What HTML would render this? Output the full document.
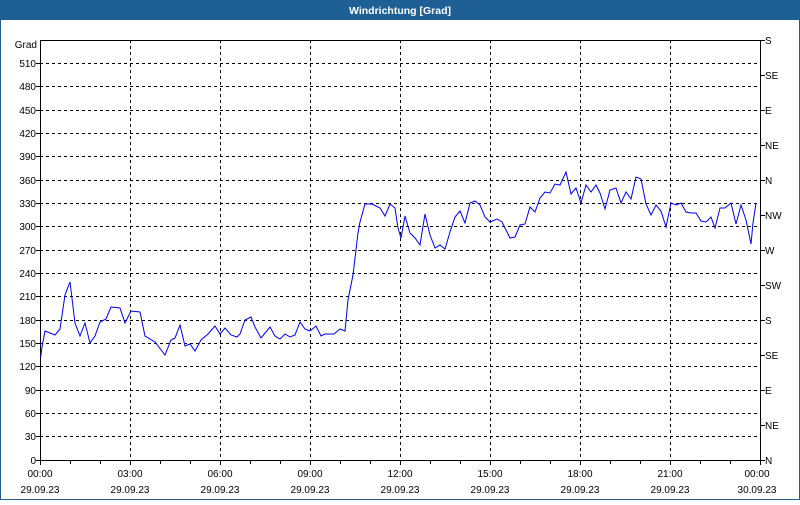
<!DOCTYPE html>
<html><head><meta charset="utf-8"><style>
body{margin:0;width:800px;height:500px;overflow:hidden;background:#fff;font-family:"Liberation Sans",sans-serif}
</style></head><body>
<svg width="800" height="500" xmlns="http://www.w3.org/2000/svg" font-family="Liberation Sans, sans-serif" font-size="10">
<rect x="0" y="0" width="800" height="500" fill="#fff"/>
<rect x="0" y="0" width="800" height="20" fill="#1e5f96"/>
<rect x="0.5" y="0.5" width="799" height="499" fill="none" stroke="#1e5f96"/>
<text x="400" y="14" text-anchor="middle" fill="#fff" font-weight="bold" font-size="10.5">Windrichtung [Grad]</text>
<g stroke="#000" stroke-dasharray="3,3" stroke-width="1">
<path d="M40 63.5H760M40 86.5H760M40 110.5H760M40 133.5H760M40 156.5H760M40 180.5H760M40 203.5H760M40 226.5H760M40 250.5H760M40 273.5H760M40 296.5H760M40 320.5H760M40 343.5H760M40 366.5H760M40 390.5H760M40 413.5H760M40 436.5H760"/>
<path d="M130.5 40V460M220.5 40V460M310.5 40V460M400.5 40V460M490.5 40V460M580.5 40V460M670.5 40V460"/>
</g>
<rect x="40.5" y="40.5" width="720" height="420" fill="none" stroke="#000"/>
<g stroke="#000">
<path d="M36 63.5H40M36 86.5H40M36 110.5H40M36 133.5H40M36 156.5H40M36 180.5H40M36 203.5H40M36 226.5H40M36 250.5H40M36 273.5H40M36 296.5H40M36 320.5H40M36 343.5H40M36 366.5H40M36 390.5H40M36 413.5H40M36 436.5H40M36 460.5H40"/>
<path d="M760 40.5H765M760 75.5H765M760 110.5H765M760 145.5H765M760 180.5H765M760 215.5H765M760 250.5H765M760 285.5H765M760 320.5H765M760 355.5H765M760 390.5H765M760 425.5H765M760 460.5H765"/>
<path d="M40.5 460V465M70.5 460V464M100.5 460V464M130.5 460V465M160.5 460V464M190.5 460V464M220.5 460V465M250.5 460V464M280.5 460V464M310.5 460V465M340.5 460V464M370.5 460V464M400.5 460V465M430.5 460V464M460.5 460V464M490.5 460V465M520.5 460V464M550.5 460V464M580.5 460V465M610.5 460V464M640.5 460V464M670.5 460V465M700.5 460V464M730.5 460V464M760.5 460V465"/>
</g>
<g text-anchor="end" fill="#000">
<text x="37" y="48">Grad</text>
<text x="36" y="67">510</text><text x="36" y="90">480</text><text x="36" y="114">450</text><text x="36" y="137">420</text><text x="36" y="160">390</text><text x="36" y="184">360</text><text x="36" y="207">330</text><text x="36" y="230">300</text><text x="36" y="254">270</text><text x="36" y="277">240</text><text x="36" y="300">210</text><text x="36" y="324">180</text><text x="36" y="347">150</text><text x="36" y="370">120</text><text x="36" y="394">90</text><text x="36" y="417">60</text><text x="36" y="440">30</text><text x="36" y="464">0</text>
</g>
<g fill="#000">
<text x="765" y="44">S</text><text x="765" y="79">SE</text><text x="765" y="114">E</text><text x="765" y="149">NE</text><text x="765" y="184">N</text><text x="765" y="219">NW</text><text x="765" y="254">W</text><text x="765" y="289">SW</text><text x="765" y="324">S</text><text x="765" y="359">SE</text><text x="765" y="394">E</text><text x="765" y="429">NE</text><text x="765" y="464">N</text>
</g>
<g text-anchor="middle" fill="#000">
<text x="40" y="477">00:00</text><text x="40" y="493">29.09.23</text>
<text x="130" y="477">03:00</text><text x="130" y="493">29.09.23</text>
<text x="220" y="477">06:00</text><text x="220" y="493">29.09.23</text>
<text x="310" y="477">09:00</text><text x="310" y="493">29.09.23</text>
<text x="400" y="477">12:00</text><text x="400" y="493">29.09.23</text>
<text x="490" y="477">15:00</text><text x="490" y="493">29.09.23</text>
<text x="580" y="477">18:00</text><text x="580" y="493">29.09.23</text>
<text x="670" y="477">21:00</text><text x="670" y="493">29.09.23</text>
<text x="757" y="477">00:00</text><text x="757" y="493">30.09.23</text>
</g>
<polyline fill="none" stroke="#0000ee" stroke-width="1" points="40.7,357 42,347 45,331 55,335 60,329 65,295 70,282 75,323 80,336 85,323 90,343 95,336 100,322 106,319 111,307 120,308 125,323 131,311 140,312 145,336 155,342 165,355 171,340 175,338 180,325 185,346 190,344 195,351 201,340 208,334 215,326 220,334 225,328 231,335 237,337 240,334 245,320 251,317 255,327 261,338 270,327 275,336 280,339 285,334 290,337 295,335 300,322 305,329 310,331 316,326 321,336 325,334 334,334 340,329 345,331 348,300 353,275 358,233 360,222 365,204 372,204 380,208 385,216 390,204 395,208 398,228 401,238 403,227 405,216 410,233 415,238 420,245 425,214 430,235 435,248 440,245 445,249 450,232 455,217 460,211 465,223 470,203 475,201 480,205 485,217 490,222 497,219 502,222 510,238 515,237 520,225 525,224 530,207 535,212 540,198 545,192 550,193 555,184 560,185 566,172 571,194 576,188 581,203 586,185 591,192 596,185 600,193 605,209 610,190 616,188 621,203 626,192 631,199 636,177 641,179 646,204 651,215 656,205 661,211 666,227 671,203 676,205 681,203 686,212 691,213 696,213 701,221 706,222 711,217 715,228 720,208 725,208 731,203 736,224 741,205 746,220 751,244 753,223 756,203"/>
</svg>
</body></html>
